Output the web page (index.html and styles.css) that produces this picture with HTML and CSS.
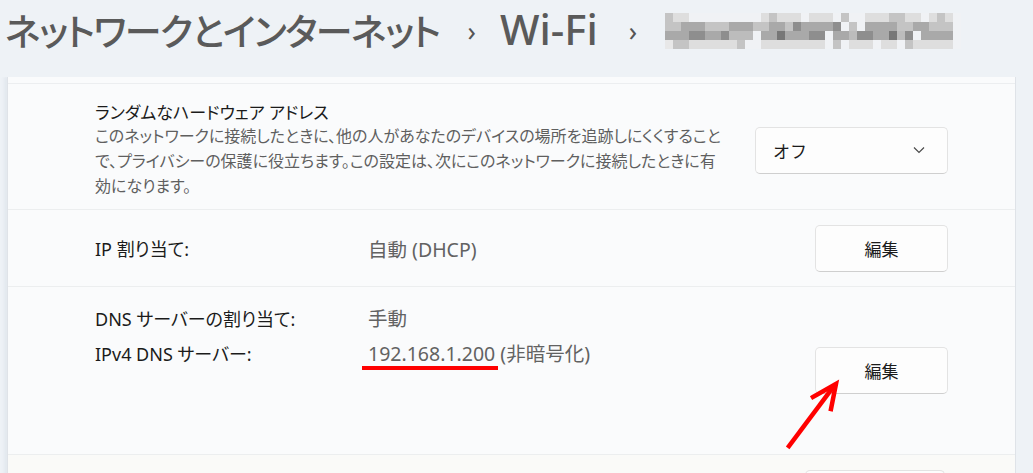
FILE: index.html
```html
<!DOCTYPE html>
<html lang="ja">
<head>
<meta charset="utf-8">
<title>Wi-Fi</title>
<link rel="stylesheet" href="styles.css">
</head>
<body>
<div class="page">
  <header class="breadcrumb">
    <span class="crumb crumb-jp">ネットワークとインターネット</span>
    <span class="sep">›</span>
    <span class="crumb crumb-en">Wi-Fi</span>
    <span class="sep sep-last">›</span>
    <svg class="mosaic" width="296" height="36" viewBox="0 0 296 36" shape-rendering="crispEdges" aria-label="ネットワーク名（モザイク）">
      <rect x="0" y="0" width="296" height="36" fill="#f0f2f5"/>
      <g fill="#dedede">
        <rect x="8" y="0" width="16" height="9"/><rect x="96" y="0" width="40" height="9"/><rect x="144" y="0" width="24" height="9"/><rect x="200" y="0" width="56" height="9"/><rect x="264" y="0" width="24" height="9"/>
        <rect x="0" y="27" width="8" height="9" fill="#e8e8e8"/><rect x="24" y="27" width="48" height="9"/><rect x="96" y="27" width="64" height="9"/><rect x="184" y="27" width="24" height="9"/><rect x="216" y="27" width="16" height="9"/><rect x="248" y="27" width="40" height="9"/>
      </g>
      <g fill="#c4c4c4">
        <rect x="0" y="0" width="8" height="9"/><rect x="104" y="0" width="8" height="9"/><rect x="176" y="0" width="8" height="9"/><rect x="224" y="0" width="16" height="9"/><rect x="272" y="0" width="8" height="9"/>
        <rect x="0" y="9" width="16" height="9"/><rect x="40" y="9" width="24" height="9"/><rect x="88" y="9" width="16" height="9"/><rect x="120" y="9" width="8" height="9"/><rect x="184" y="9" width="8" height="9"/><rect x="232" y="9" width="16" height="9"/><rect x="264" y="9" width="24" height="9"/>
        <rect x="8" y="27" width="16" height="9"/><rect x="72" y="27" width="8" height="9"/><rect x="168" y="27" width="8" height="9"/><rect x="240" y="27" width="8" height="9"/>
      </g>
      <g fill="#a9a9a9">
        <rect x="16" y="9" width="24" height="9"/><rect x="64" y="9" width="24" height="9"/><rect x="104" y="9" width="16" height="9"/><rect x="136" y="9" width="32" height="9"/><rect x="200" y="9" width="32" height="9"/><rect x="248" y="9" width="16" height="9"/>
        <rect x="0" y="18" width="24" height="9"/><rect x="40" y="18" width="16" height="9"/><rect x="96" y="18" width="48" height="9"/><rect x="168" y="18" width="16" height="9"/><rect x="208" y="18" width="24" height="9"/><rect x="256" y="18" width="32" height="9"/>
      </g>
      <g fill="#8e8e8e">
        <rect x="128" y="9" width="8" height="9"/><rect x="168" y="9" width="8" height="9"/>
        <rect x="24" y="18" width="16" height="9"/><rect x="56" y="18" width="8" height="9"/><rect x="144" y="18" width="16" height="9"/><rect x="192" y="18" width="16" height="9"/><rect x="240" y="18" width="8" height="9"/>
      </g>
      <g fill="#777">
        <rect x="112" y="18" width="8" height="9"/><rect x="224" y="18" width="8" height="9"/>
      </g>
      <g fill="#bcbcbc">
        <rect x="64" y="18" width="24" height="9"/><rect x="184" y="18" width="8" height="9"/><rect x="232" y="18" width="8" height="9"/>
      </g>
    </svg>
  </header>

  <div class="viewport">
    <section class="card">
      <div class="row-clip"></div>

      <div class="row row-random">
        <div class="row-text">
          <div class="row-title">ランダムなハードウェア アドレス</div>
          <div class="row-desc">このネットワークに接続したときに、他の人があなたのデバイスの場所を追跡しにくくすること<br>で、プライバシーの保護に役立ちます。この設定は、次にこのネットワークに接続したときに有<br>効になります。</div>
        </div>
        <button class="select">
          <span>オフ</span>
          <svg class="chevron" width="12" height="8" viewBox="0 0 12 8"><path d="M1 1.5 L6 6.5 L11 1.5" fill="none" stroke="#4a4a4a" stroke-width="1.2"/></svg>
        </button>
      </div>

      <div class="row row-ip">
        <div class="props">
          <span class="prop-label">IP 割り当て:</span>
          <span class="prop-value">自動 (DHCP)</span>
        </div>
        <button class="btn">編集</button>
      </div>

      <div class="row row-dns">
        <div class="props props-top">
          <span class="prop-label">DNS サーバーの割り当て:</span>
          <span class="prop-value">手動</span>
          <span class="prop-label">IPv4 DNS サーバー:</span>
          <span class="prop-value">192.168.1.200 (非暗号化)</span>
        </div>
        <button class="btn">編集</button>
      </div>

      <div class="row row-next">
        <div class="props"></div>
        <button class="btn btn-wide" aria-label="編集"></button>
      </div>
    </section>
  </div>

  <div class="underline"></div>
  <svg class="arrow" width="1033" height="473" viewBox="0 0 1033 473">
    <g fill="none" stroke="#ff0000" stroke-width="4.5" stroke-linecap="square" stroke-linejoin="miter">
      <path d="M789 446 L834 386"/>
      <path d="M813 397 L836 384 L831 409"/>
    </g>
  </svg>
</div>
</body>
</html>
```

FILE: styles.css
```css
* { box-sizing: border-box; }

html, body {
  margin: 0;
  padding: 0;
}

body {
  background: #eef2f6;
  font-family: "Noto Sans", "Noto Sans CJK JP", sans-serif;
  color: #1b1b1b;
  overflow: hidden;
}

.page {
  position: relative;
  width: 1033px;
  height: 473px;
  overflow: hidden;
}

/* ---------- breadcrumb ---------- */
.breadcrumb {
  height: 60px;
  margin-bottom: 17px;
  padding-left: 5px;
  display: flex;
  align-items: center;
  color: #5a5a5a;
  white-space: nowrap;
}

.crumb {
  line-height: normal;
}

.crumb-jp {
  font-family: "Noto Sans CJK JP", sans-serif;
  font-weight: 500;
  font-size: 37px;
  font-feature-settings: "palt";
  letter-spacing: -1.5px;
}

.crumb-en {
  font-family: "Noto Sans", sans-serif;
  font-weight: 500;
  font-size: 42px;
  position: relative;
  top: -2px;
}

.sep {
  font-family: "Noto Sans", sans-serif;
  font-size: 27px;
  font-weight: 400;
  margin: 0 24px 0 28px;
  color: #555;
}

.sep-last {
  margin: 0 28px 0 31px;
}

.mosaic {
  display: block;
  margin-top: 2px;
}

/* ---------- card ---------- */
.viewport {
  height: 396px;
  overflow: hidden;
}

.card {
  margin-left: 7px;
  width: 1009px;
  background: #fafbfc;
  border-left: 1px solid #dfe3e8;
  border-right: 1px solid #dfe3e8;
  box-shadow: -3px 0 3px rgba(180, 190, 205, 0.18);
}

.row-clip {
  height: 7px;
  border-bottom: 1px solid #eceef0;
}

.row {
  display: flex;
  align-items: center;
  padding: 0 67px 0 87px;
  border-bottom: 1px solid #eceeef;
}

.row-random {
  padding-top: 17px;
  padding-bottom: 10px;
}

.row-text {
  flex: 1;
}

.row-title {
  font-size: 17px;
  line-height: 23px;
  color: #1b1b1b;
  font-feature-settings: "palt";
}

.row-desc {
  font-size: 16px;
  line-height: 25px;
  letter-spacing: 0;
  color: #5f5f5f;
  font-feature-settings: "palt";
}

.row-ip {
  height: 77px;
}

.row-dns {
  height: 168px;
  align-items: center;
}

.row-next {
  height: 40px;
  align-items: flex-start;
  padding-top: 15px;
  padding-right: 70px;
  background: #fafaf8;
}

.props {
  flex: 1;
  display: grid;
  grid-template-columns: 273px auto;
  align-items: center;
}

.props-top {
  align-self: flex-start;
  padding-top: 13px;
  grid-auto-rows: 35px;
}

.prop-label {
  font-size: 18px;
  color: #1b1b1b;
  font-feature-settings: "palt";
}

.prop-value {
  font-size: 19.5px;
  color: #626262;
}

/* ---------- controls ---------- */
.btn, .select {
  font-family: "Noto Sans CJK JP", sans-serif;
  background: #fdfdfd;
  border: 1px solid #e3e3e3;
  border-bottom-color: #cfcfcf;
  border-radius: 5px;
  color: #1b1b1b;
  font-size: 17px;
}

.btn {
  width: 133px;
  height: 47px;
  padding: 0;
}

.btn-wide {
  width: 140px;
}

.select {
  width: 193px;
  height: 47px;
  display: flex;
  align-items: center;
  justify-content: space-between;
  padding: 0 22px 0 17px;
}

.chevron {
  display: block;
}

/* ---------- annotation ---------- */
.underline {
  position: absolute;
  left: 362px;
  top: 366px;
  width: 136px;
  height: 4px;
  background: #ff0000;
}

.arrow {
  position: absolute;
  left: 0;
  top: 0;
  pointer-events: none;
}
```
